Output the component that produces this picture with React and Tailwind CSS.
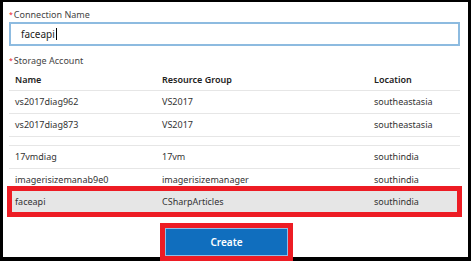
import React from 'react';

const ROWS = [
    { name: 'vs2017diag962', group: 'VS2017', loc: 'southeastasia' },
    { name: 'vs2017diag873', group: 'VS2017', loc: 'southeastasia' },
    null,
    { name: '17vmdiag', group: '17vm', loc: 'southindia' },
    { name: 'imagerisizemanab9e0', group: 'imagerisizemanager', loc: 'southindia', last: true },
];

const font = "font-['Segoe_UI','Noto_Sans',sans-serif]";

export default function App() {
    return (
        <div className={`w-[471px] h-[261px] bg-black border-black border-t-2 border-l-3 border-r-3 border-b-4 ${font}`}>
            <div className="h-full bg-white pt-[6px] pl-[6px] pr-[8px] text-[9px] text-[#333]">
                {/* CONNECTION NAME */}
                <p className="h-[14px] leading-[14px] text-[#444]">
                    <span className="text-[#e81123] text-[7px] align-top mr-[1px]">*</span>Connection Name
                </p>
                <div className="h-[24px] border-2 border-[#8dbbe0] flex items-center pl-[10px] text-[10px] text-[#222]">
                    faceapi<span className="inline-block w-px h-[12px] bg-black ml-[1px]" />
                </div>

                {/* STORAGE ACCOUNT */}
                <p className="mt-[8px] h-[14px] leading-[14px] text-[#444]">
                    <span className="text-[#e81123] text-[7px] align-top mr-[1px]">*</span>Storage Account
                </p>
                <div className="mt-[2px] h-[21px] border-b border-[#e6e6e6] grid grid-cols-[147px_212px_1fr] items-center pl-[6px] font-semibold text-[#222]">
                    <span>Name</span><span>Resource Group</span><span>Location</span>
                </div>
                {ROWS.map((r, i) => r ? (
                    <div key={i}
                        className={`grid grid-cols-[147px_212px_1fr] items-center pl-[6px] ${r.last ? 'h-[22px]' : 'h-[23px] border-b border-[#e6e6e6]'}`}>
                        <span>{r.name}</span><span>{r.group}</span><span>{r.loc}</span>
                    </div>
                ) : (
                    <div key={i} className="h-[9px] border-b border-[#e6e6e6]" />
                ))}

                {/* SELECTED ROW */}
                <div className="-mt-[5px] -mx-[2px] border-[5px] border-[#ed1c24]">
                    <div className="h-[21px] bg-[#e6e6e6] grid grid-cols-[147px_212px_1fr] items-center pl-[3px]">
                        <span>faceapi</span><span>CSharpArticles</span><span>southindia</span>
                    </div>
                </div>

                {/* CREATE */}
                <div className="mt-[6px] ml-[151px] w-[133px] border-[5px] border-[#ed1c24]">
                    <button className="w-full h-[28px] bg-[#106ebe] border border-[#8fbde6] text-white text-[10px] font-semibold">
                        Create
                    </button>
                </div>
            </div>
        </div>
    );
}
